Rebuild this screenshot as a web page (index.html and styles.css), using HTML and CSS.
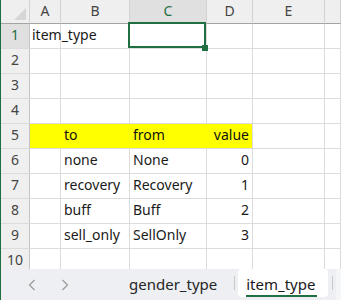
FILE: index.html
```html
<!DOCTYPE html>
<html lang="ja">

<head>
    <meta charset="UTF-8">
    <title>item_type</title>
    <link rel="stylesheet" href="styles.css">
</head>

<body>
    <div class="sheet">
        <div class="grid">
            <div class="corner"><span class="tri"></span></div>
            <div class="colhdr">A</div>
            <div class="colhdr">B</div>
            <div class="colhdr sel">C</div>
            <div class="colhdr">D</div>
            <div class="colhdr">E</div>
            <div class="colhdr"></div>

            <div class="rowhdr sel">1</div>
            <div class="cell"><span class="spill">item_type</span></div>
            <div class="cell"></div>
            <div class="cell active"><span class="handle"></span></div>
            <div class="cell"></div>
            <div class="cell"></div>
            <div class="cell"></div>

            <div class="rowhdr">2</div>
            <div class="cell"></div><div class="cell"></div><div class="cell"></div><div class="cell"></div><div class="cell"></div><div class="cell"></div>

            <div class="rowhdr">3</div>
            <div class="cell"></div><div class="cell"></div><div class="cell"></div><div class="cell"></div><div class="cell"></div><div class="cell"></div>

            <div class="rowhdr">4</div>
            <div class="cell"></div><div class="cell"></div><div class="cell"></div><div class="cell"></div><div class="cell"></div><div class="cell"></div>

            <div class="rowhdr">5</div>
            <div class="cell fill"></div>
            <div class="cell fill">to</div>
            <div class="cell fill">from</div>
            <div class="cell fill last num">value</div>
            <div class="cell"></div>
            <div class="cell"></div>

            <div class="rowhdr">6</div>
            <div class="cell"></div>
            <div class="cell">none</div>
            <div class="cell">None</div>
            <div class="cell num">0</div>
            <div class="cell"></div>
            <div class="cell"></div>

            <div class="rowhdr">7</div>
            <div class="cell"></div>
            <div class="cell">recovery</div>
            <div class="cell">Recovery</div>
            <div class="cell num">1</div>
            <div class="cell"></div>
            <div class="cell"></div>

            <div class="rowhdr">8</div>
            <div class="cell"></div>
            <div class="cell">buff</div>
            <div class="cell">Buff</div>
            <div class="cell num">2</div>
            <div class="cell"></div>
            <div class="cell"></div>

            <div class="rowhdr">9</div>
            <div class="cell"></div>
            <div class="cell">sell_only</div>
            <div class="cell">SellOnly</div>
            <div class="cell num">3</div>
            <div class="cell"></div>
            <div class="cell"></div>

            <div class="rowhdr">10</div>
            <div class="cell"></div><div class="cell"></div><div class="cell"></div><div class="cell"></div><div class="cell"></div><div class="cell"></div>
        </div>

        <div class="tabs">
            <span class="arrow">
                <svg width="8" height="12" viewBox="0 0 8 12"><path d="M6.5 1 L1.5 6 L6.5 11" fill="none" stroke="#9a9a9a" stroke-width="1.2"/></svg>
            </span>
            <span class="arrow">
                <svg width="8" height="12" viewBox="0 0 8 12"><path d="M1.5 1 L6.5 6 L1.5 11" fill="none" stroke="#9a9a9a" stroke-width="1.2"/></svg>
            </span>
            <span class="tab">gender_type</span>
            <span class="sep"></span>
            <span class="tab current"><span class="label">item_type</span></span>
            <span class="sep"></span>
            <span class="more"></span>
        </div>
    </div>
</body>

</html>
```

FILE: styles.css
```css
* {
    padding: 0;
    margin: 0;
    box-sizing: border-box;
}

body {
    width: 341px;
    height: 300px;
    overflow: hidden;
    background: #ffffff;
    font-family: "Noto Sans", "Noto Sans CJK JP", sans-serif;
    color: #1a1a1a;
}

.sheet {
    height: 300px;
    border-left: 1px solid #1f6f43;
    display: flex;
    flex-direction: column;
}

.grid {
    height: 269px;
    flex: none;
    overflow: hidden;
    display: grid;
    grid-template-columns: 29px 31px 69px 77px 46px 72px 1fr;
    grid-template-rows: 24px repeat(10, 25px);
}

.corner,
.colhdr,
.rowhdr {
    background: #efefef;
    color: #444444;
    font-size: 14px;
    border-right: 1px solid #d2d2d2;
    border-bottom: 1px solid #d2d2d2;
}

.corner,
.colhdr {
    border-bottom-color: #a3a3a3;
    text-align: center;
    line-height: 21px;
}

.corner {
    position: relative;
}

.tri {
    position: absolute;
    right: 3px;
    bottom: 3px;
    width: 12px;
    height: 12px;
    background: #d6d6d6;
    clip-path: polygon(100% 0, 100% 100%, 0 100%);
}

.rowhdr {
    text-align: center;
    line-height: 21px;
    border-right-color: #c4c4c4;
    border-bottom-color: #dcdcdc;
}

.sel {
    background: #e0e0e0;
    color: #1f6f43;
}

.cell {
    border-right: 1px solid #dcdcdc;
    border-bottom: 1px solid #dcdcdc;
    font-size: 14px;
    line-height: 21px;
    padding: 0 3px;
    white-space: nowrap;
}

.spill {
    position: relative;
    left: -1px;
    z-index: 1;
}

.num {
    text-align: right;
}

.fill {
    background: #ffff00;
    border-right-color: #ffff00;
    color: #111111;
}

.fill.last {
    border-right-color: #dcdcdc;
}

.active {
    position: relative;
}

.active::before {
    content: "";
    position: absolute;
    top: -2px;
    left: -2px;
    right: 0;
    bottom: 0;
    border: 2px solid #1f6f43;
}

.handle {
    position: absolute;
    right: -2px;
    bottom: -3px;
    width: 6px;
    height: 6px;
    background: #1f6f43;
    z-index: 2;
}

.tabs {
    flex: 1;
    background: #edeff2;
    display: flex;
    align-items: flex-start;
}

.arrow {
    width: 8px;
    height: 12px;
    margin-top: 10px;
    display: flex;
}

.arrow:first-child {
    margin-left: 27px;
}

.arrow + .arrow {
    margin-left: 25px;
}

.tab {
    font-size: 15px;
    line-height: 20px;
    color: #262626;
    padding-top: 5px;
    margin-left: 60px;
}

.sep {
    width: 1px;
    height: 14px;
    margin-top: 7px;
    margin-left: 17px;
    background: #c8c8c8;
}

.tab.current {
    background: #ffffff;
    border-radius: 4px;
    height: 28px;
    width: 90px;
    margin-left: 3px;
    padding: 5px 0 0 10px;
    color: #1a1a1a;
}

.label {
    display: inline-block;
    border-bottom: 2px solid #1f6f43;
    line-height: 19px;
    padding: 0 2px 1px 0;
    margin-left: -2px;
}

.tab.current + .sep {
    margin-left: 4px;
}

.more {
    flex: 1;
    height: 31px;
    margin-left: 3px;
    background: #f5f6f8;
    border-radius: 4px 0 0 0;
}
```
